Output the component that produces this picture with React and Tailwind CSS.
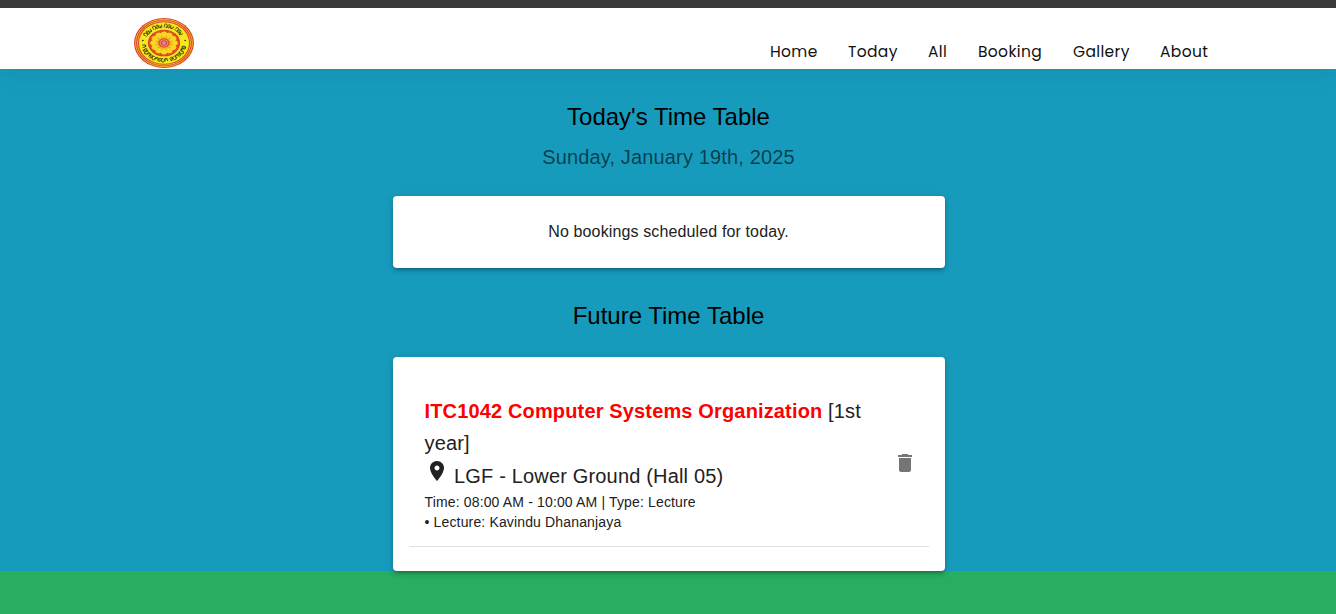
import React from "react";

const NAV = [
  { label: "Home", width: "w-[48px]" },
  { label: "Today", width: "w-[50px]" },
  { label: "All", width: "w-[20px]" },
  { label: "Booking", width: "w-[65px]" },
  { label: "Gallery", width: "w-[57px]" },
  { label: "About", width: "w-[49px]" },
];

const PETALS = Array.from({ length: 12 }, (_, i) => i * 30);

// Letter-like squiggles set around the ring of the crest, in degrees from the top.
const TOP_MARKS = [-61, -52, -43, -28, -19, -10, 5, 14, 23, 38, 47, 56];
const BOTTOM_MARKS = [105, 114, 123, 132, 141, 150, 159, 174, 183, 192, 201, 210, 219, 228, 237, 246, 260];
const MARK_SHAPES = [
  "M-1.6 1.5V-.6a1.5 1.5 0 0 1 3 0V1.5H-.2",
  "M1.5-1.4C-.4-2.2-2-.9-1.6.6s2.9 1.3 3 0S0-.8-.4.4",
  "M-1.6-1.3V.5a1.5 1.3 0 0 0 3 0V-1.3M0 0V1.6",
];

function Crest() {
  return (
    <svg className="block h-[50px] w-[60px]" viewBox="0 0 60 60" preserveAspectRatio="none" aria-hidden="true">
      <circle cx="30" cy="30" r="30" fill="#d8452c" />
      <circle cx="30" cy="30" r="28.4" fill="none" stroke="#f5c52c" strokeWidth="0.9" />
      <circle cx="30" cy="30" r="26.5" fill="none" stroke="#f5c52c" strokeWidth="0.9" />
      <circle cx="30" cy="30" r="25" fill="#f6e81c" />
      <circle cx="30" cy="30" r="16" fill="#dc3328" />
      <circle cx="30" cy="30" r="14.7" fill="none" stroke="#ec8a2a" strokeWidth="0.5" />
      <g fill="none" stroke="#3a360a" strokeWidth="0.85">
        {TOP_MARKS.map((a, i) => (
          <path key={a} d={MARK_SHAPES[i % 3]} transform={`rotate(${a} 30 30) translate(30 9.4) scale(0.9 1.15)`} />
        ))}
        {BOTTOM_MARKS.map((a, i) => (
          <path key={a} d={MARK_SHAPES[(i + 1) % 3]} transform={`rotate(${a} 30 30) translate(30 9.4) scale(0.9 1.15)`} />
        ))}
      </g>
      <circle cx="8.8" cy="27" r="0.9" fill="#2c2a08" />
      <circle cx="51.2" cy="27" r="0.9" fill="#2c2a08" />
      {PETALS.map((a) => (
        <path
          key={a}
          d="M30 26L26.8 19.5Q26.6 16.4 30 16.200Q33.400 16.400 33.200 19.500Z"
          fill="#f7d81f"
          transform={`rotate(${a} 30 30)`}
        />
      ))}
      <circle cx="30" cy="30" r="7.6" fill="#f3b32a" />
      <circle cx="30" cy="30" r="5.6" fill="#dc4a3a" />
      <circle cx="30" cy="30" r="3.9" fill="none" stroke="#f0a54a" strokeWidth="0.9" />
      <circle cx="30" cy="30" r="2" fill="#c98fb0" />
    </svg>
  );
}

function PinIcon() {
  return (
    <svg className="block size-6 shrink-0" viewBox="0 0 24 24" fill="currentColor" aria-hidden="true">
      <path d="M12 2C8.13 2 5 5.13 5 9c0 5.25 7 13 7 13s7-7.75 7-13c0-3.87-3.13-7-7-7m0 9.5c-1.38 0-2.5-1.12-2.5-2.5s1.12-2.5 2.5-2.5 2.5 1.12 2.5 2.5-1.12 2.5-2.5 2.5" />
    </svg>
  );
}

function TrashIcon() {
  return (
    <svg className="block size-6" viewBox="0 0 24 24" fill="currentColor" aria-hidden="true">
      <path d="M6 19c0 1.1.9 2 2 2h8c1.1 0 2-.9 2-2V7H6zM19 4h-3.5l-1-1h-5l-1 1H5v2h14z" />
    </svg>
  );
}

function Card({ className, children }) {
  return (
    <section
      className={`w-[552px] rounded-[4px] bg-white text-[#212121] shadow-[0_3px_3px_-2px_rgba(0,0,0,0.2),0_3px_4px_0_rgba(0,0,0,0.14),0_1px_8px_0_rgba(0,0,0,0.12)] ${className}`}
    >
      {children}
    </section>
  );
}

export default function App() {
  return (
    <div className="flex h-[614px] w-full flex-col overflow-hidden bg-[#27ae60] font-['Liberation_Sans',Arial,sans-serif]">
      <div className="h-2 shrink-0 bg-[#3b3b3b]" />
      <header className="z-10 flex h-[61px] shrink-0 justify-between bg-white pr-[127px] pl-[134px] shadow-[0_5px_25px_rgba(0,0,0,0.07)]">
        <div className="pt-[10px]">
          <Crest />
        </div>
        <nav className="flex gap-[30px] pt-[32px] font-['Poppins','Inter',sans-serif] text-[15.5px] leading-6 tracking-[0.35px] text-[#111] [font-feature-settings:'cv11']">
          {NAV.map((item) => (
            <a key={item.label} href="#" className={`whitespace-nowrap ${item.width}`}>
              {item.label}
            </a>
          ))}
        </nav>
      </header>

      <main className="flex h-[502px] shrink-0 flex-col items-center bg-[#179bbd] pt-8 pl-[2px]">
        <h1 className="pr-px text-2xl leading-8 text-black">Today's Time Table</h1>
        <p className="mt-2 pr-px text-xl leading-8 tracking-[0.15px] text-black/60">Sunday, January 19th, 2025</p>

        <Card className="mt-[23px] flex h-[72px] shrink-0 items-center justify-center">
          <p className="pr-px text-base leading-6 tracking-[0.13px]">No bookings scheduled for today.</p>
        </Card>

        <h2 className="mt-8 pr-px text-2xl leading-8 text-black">Future Time Table</h2>

        <Card className="mt-[25px] h-[214px] shrink-0 px-4 pt-6">
          <article className="flex h-[166px] items-center justify-between border-b border-black/12 pr-3 pl-[15.5px]">
            <div className="w-[448px]">
              <h3 className="text-xl leading-8 tracking-[0.15px]">
                <b className="text-[#ff0000]">ITC1042 Computer Systems Organization</b> [1st year]
              </h3>
              <div className="flex h-[33px] gap-[5.5px] text-xl leading-[34px] tracking-[0.17px]">
                <PinIcon />
                <span>LGF - Lower Ground (Hall 05)</span>
              </div>
              <p className="text-sm leading-5 tracking-[0.15px]">Time: 08:00 AM - 10:00 AM | Type: Lecture</p>
              <p className="text-sm leading-5 tracking-[0.15px]">• Lecture: Kavindu Dhananjaya</p>
            </div>
            <button type="button" aria-label="Delete" className="mb-[2px] text-[#757575]">
              <TrashIcon />
            </button>
          </article>
        </Card>
      </main>
    </div>
  );
}
